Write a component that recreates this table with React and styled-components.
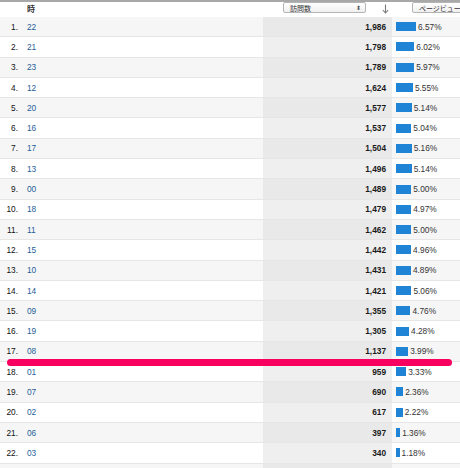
import styled, { createGlobalStyle } from 'styled-components';

const rows = [
    ['22', '1,986', 6.57], ['21', '1,798', 6.02], ['23', '1,789', 5.97],
    ['12', '1,624', 5.55], ['20', '1,577', 5.14], ['16', '1,537', 5.04],
    ['17', '1,504', 5.16], ['13', '1,496', 5.14], ['00', '1,489', 5.0],
    ['18', '1,479', 4.97], ['11', '1,462', 5.0], ['15', '1,442', 4.96],
    ['10', '1,431', 4.89], ['14', '1,421', 5.06], ['09', '1,355', 4.76],
    ['19', '1,305', 4.28], ['08', '1,137', 3.99], ['01', '959', 3.33],
    ['07', '690', 2.36], ['02', '617', 2.22], ['06', '397', 1.36],
    ['03', '340', 1.18],
];

const MAX = 6.57;

const App = () => {
    return (
        <>
            <GlobalStyle />
            <Page>
                <Table>
                    <HeaderRow>
                        <Cell />
                        <HeadLabel>時</HeadLabel>
                        <HeadMetric>
                            <Select>
                                <span>訪問数</span>
                                <Updown>⬍</Updown>
                            </Select>
                            <SortArrow width="7" height="10" viewBox="0 0 7 10">
                                <path d="M3.5 0.5 V9 M0.8 6 L3.5 9 L6.2 6" fill="none" stroke="#7a7a7a" strokeWidth="1.1" />
                            </SortArrow>
                        </HeadMetric>
                        <HeadBar>
                            <Select className='wide'>
                                <span>ページビュー</span>
                            </Select>
                        </HeadBar>
                    </HeaderRow>
                    {rows.map(([hour, value, pct], i) => (
                        <Row key={i} $odd={i % 2 === 0}>
                            <Rank>{i + 1}.</Rank>
                            <Hour>{hour}</Hour>
                            <Value $odd={i % 2 === 0}>{value}</Value>
                            <BarCell>
                                <Bar style={{ width: `${(pct / MAX) * 20}px` }} />
                                <Pct>{pct.toFixed(2)}%</Pct>
                            </BarCell>
                        </Row>
                    ))}
                    <Row $odd>
                        <Cell />
                        <Cell />
                        <Value $odd />
                        <Cell />
                    </Row>
                </Table>
                {/* 17位の下に引いたマーカー線 */}
                <Marker />
            </Page>
        </>
    );
}

export default App;

const GlobalStyle = createGlobalStyle`
    html, body {
        margin : 0;
        padding : 0;
        background : #fff;
    }
    body {
        font-family : "Liberation Sans", "Noto Sans CJK JP", sans-serif;
        font-size : 8.3px;
        color : #222;
    }
`

const Page = styled.div`
    position : relative;
    width : 460px;
    height : 468px;
    overflow : hidden;
    border-top : 2px solid #a8a8a8;
    box-sizing : border-box;
`

const Table = styled.div`
    display : flex;
    flex-direction : column;
`

const HeaderRow = styled.div`
    display : grid;
    grid-template-columns : 20px 243px 129px 1fr;
    height : 15px;
    align-items : center;
`

const Row = styled.div`
    display : grid;
    grid-template-columns : 20px 243px 129px 1fr;
    height : 19.3px;
    border-bottom : 1px solid #e6e6e6;
    background : ${p => p.$odd ? '#f6f6f6' : '#fff'};
    align-items : center;
    flex-shrink : 0;
`

const Cell = styled.div`
    height : 100%;
`

const HeadLabel = styled.div`
    padding-left : 7px;
    font-weight : bold;
    font-size : 8px;
    color : #333;
    align-self : start;
    padding-top : 1px;
`

const HeadMetric = styled.div`
    display : flex;
    align-items : flex-start;
    height : 100%;
    padding-left : 20px;
`

const HeadBar = styled.div`
    height : 100%;
    padding-left : 20px;
`

const Select = styled.div`
    display : flex;
    justify-content : space-between;
    align-items : center;
    width : 83px;
    height : 11px;
    box-sizing : border-box;
    border : 1px solid #b5b5b5;
    border-radius : 2px;
    background : linear-gradient(#fff, #f0f0f0);
    padding : 0 4px 0 6px;
    font-size : 7px;
    color : #333;
    &.wide {
        width : 60px;
        white-space : nowrap;
    }
`

const Updown = styled.span`
    font-size : 6px;
    color : #555;
`

const SortArrow = styled.svg`
    margin-left : 16px;
    margin-top : 2px;
    flex-shrink : 0;
`

const Rank = styled.div`
    text-align : right;
    padding-right : 2px;
    color : #111;
`

const Hour = styled.div`
    padding-left : 7px;
    color : #1f5d99;
`

const Value = styled.div`
    height : 100%;
    display : flex;
    align-items : center;
    justify-content : flex-end;
    padding-right : 6px;
    font-weight : bold;
    color : #1a1a1a;
    background : ${p => p.$odd ? '#e9e9e9' : '#efefef'};
`

const BarCell = styled.div`
    display : flex;
    align-items : center;
    padding-left : 4px;
    gap : 2px;
`

const Bar = styled.div`
    height : 9px;
    background : #1f84d6;
`

const Pct = styled.span`
    color : #333;
`

const Marker = styled.div`
    position : absolute;
    left : 7px;
    top : 357px;
    width : 445px;
    height : 7px;
    border-radius : 4px;
    background : #f7005f;
`
